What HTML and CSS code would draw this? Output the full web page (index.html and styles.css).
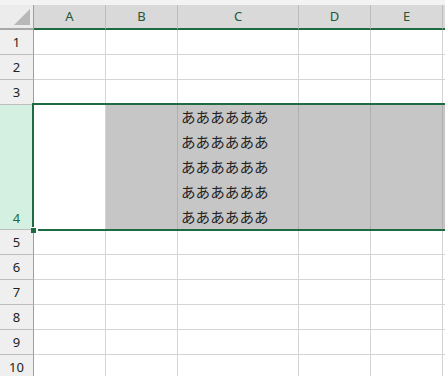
FILE: index.html
```html
<!DOCTYPE html>
<html lang="ja">
<head>
    <meta charset="UTF-8">
    <title>Sheet</title>
    <link rel="stylesheet" href="styles.css">
</head>
<body>
<div class="sheet">
    <div class="topgap"></div>
    <div class="row head">
        <div class="corner"><span class="tri"></span></div>
        <div class="col">A</div>
        <div class="col">B</div>
        <div class="col">C</div>
        <div class="col">D</div>
        <div class="col">E</div>
        <div class="col"></div>
    </div>
    <div class="row"><div class="num">1</div><div class="cell"></div><div class="cell"></div><div class="cell"></div><div class="cell"></div><div class="cell"></div><div class="cell"></div></div>
    <div class="row"><div class="num">2</div><div class="cell"></div><div class="cell"></div><div class="cell"></div><div class="cell"></div><div class="cell"></div><div class="cell"></div></div>
    <div class="row"><div class="num">3</div><div class="cell"></div><div class="cell"></div><div class="cell"></div><div class="cell"></div><div class="cell"></div><div class="cell"></div></div>
    <div class="row tall">
        <div class="num sel">4</div>
        <div class="cell active"></div>
        <div class="cell gray"></div>
        <div class="cell gray text">ああああああ<br>ああああああ<br>ああああああ<br>ああああああ<br>ああああああ</div>
        <div class="cell gray"></div>
        <div class="cell gray"></div>
        <div class="cell gray"></div>
        <span class="outline"></span>
        <span class="handle"></span>
    </div>
    <div class="row"><div class="num">5</div><div class="cell"></div><div class="cell"></div><div class="cell"></div><div class="cell"></div><div class="cell"></div><div class="cell"></div></div>
    <div class="row"><div class="num">6</div><div class="cell"></div><div class="cell"></div><div class="cell"></div><div class="cell"></div><div class="cell"></div><div class="cell"></div></div>
    <div class="row"><div class="num">7</div><div class="cell"></div><div class="cell"></div><div class="cell"></div><div class="cell"></div><div class="cell"></div><div class="cell"></div></div>
    <div class="row"><div class="num">8</div><div class="cell"></div><div class="cell"></div><div class="cell"></div><div class="cell"></div><div class="cell"></div><div class="cell"></div></div>
    <div class="row"><div class="num">9</div><div class="cell"></div><div class="cell"></div><div class="cell"></div><div class="cell"></div><div class="cell"></div><div class="cell"></div></div>
    <div class="row"><div class="num">10</div><div class="cell"></div><div class="cell"></div><div class="cell"></div><div class="cell"></div><div class="cell"></div><div class="cell"></div></div>
</div>
</body>
</html>
```

FILE: styles.css
```css
body {
    margin: 0;
    overflow: hidden;
    background: #fff;
    font-family: "Noto Sans", "Liberation Sans", "Noto Sans CJK JP", sans-serif;
}
.sheet {
    width: 445px;
    height: 376px;
    overflow: hidden;
}
.topgap {
    height: 5px;
    background: #f3f3f3;
}
.row {
    display: grid;
    grid-template-columns: 34px 72px 72px 121px 72px 72px 72px;
    height: 25px;
}
.row > div {
    box-sizing: border-box;
    border-right: 1px solid #d4d4d4;
    border-bottom: 1px solid #d4d4d4;
}
.head {
    height: 25px;
}
.head > div {
    background: #d9d9d9;
    border-right-color: #bdbdbd;
    border-bottom: 2px solid #1e6b41;
}
.head .corner {
    background: #ececec;
    border-right-color: #9e9e9e;
    border-bottom-color: #a8a8a8;
    display: flex;
    align-items: flex-end;
    justify-content: flex-end;
    padding: 0 3px 3px 0;
}
.tri {
    width: 0;
    height: 0;
    border-left: 16px solid transparent;
    border-bottom: 16px solid #b8b8b8;
}
.col {
    font-size: 13px;
    color: #23573a;
    text-align: center;
    line-height: 22px;
}
.num {
    background: #efefef;
    font-size: 13px;
    color: #222;
    text-align: center;
    line-height: 24px;
    border-right-color: #9e9e9e !important;
    border-bottom-color: #bdbdbd !important;
}
.tall {
    height: 125px;
    position: relative;
}
.num.sel {
    background: #d3f0e0;
    color: #1e6b41;
    line-height: 22px;
    display: flex;
    align-items: flex-end;
    justify-content: center;
}
.tall > .cell {
    border-bottom-color: #fff;
}
.cell.gray {
    background: #c6c6c6;
    border-right-color: #b0b0b0;
}
.cell.text {
    font-family: "Noto Sans CJK JP", sans-serif;
    font-size: 14.6px;
    line-height: 25px;
    color: #222;
    padding-left: 3px;
    white-space: nowrap;
    padding-top: 0;
    margin-top: -1px;
}
.outline {
    position: absolute;
    left: 32px;
    top: -2px;
    right: -4px;
    bottom: -1px;
    border: 2px solid #1e6b41;
    box-sizing: border-box;
}
.handle {
    position: absolute;
    left: 31px;
    bottom: -3px;
    width: 5px;
    height: 5px;
    background: #1e6b41;
    border: 1px solid #fff;
    border-width: 1px 2px 0 0;
}
```
